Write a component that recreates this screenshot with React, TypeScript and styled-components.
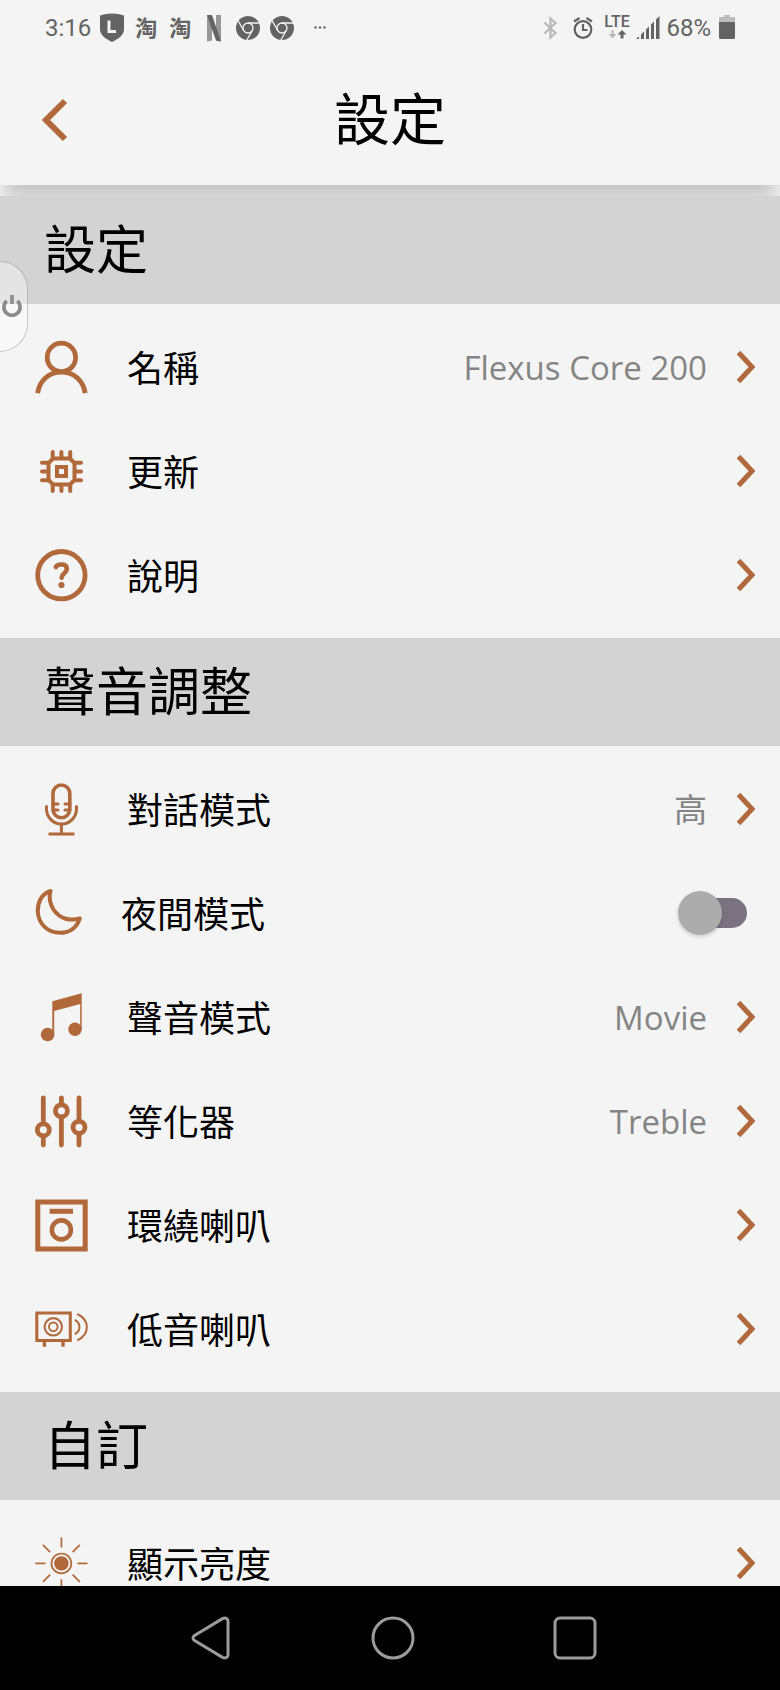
import React, { ReactNode, useState } from "react";
import styled, { createGlobalStyle, css } from "styled-components";

const ACCENT = "#b1683a";
const STATUS = "#636363";

const GlobalStyle = createGlobalStyle`
  * { box-sizing: border-box; }
  body {
    margin: 0;
    background: #f4f4f4;
    color: #000;
    font-family: "Open Sans", "Noto Sans CJK TC", sans-serif;
  }
  button { border: 0; background: none; padding: 0; font: inherit; color: inherit; cursor: pointer; }
  svg { display: block; flex: none; overflow: visible; }
`;

const Screen = styled.div`
  position: relative;
  display: flex;
  flex-direction: column;
  height: 100vh;
  overflow: hidden;
`;

const TopArea = styled.header`
  flex: none;
  margin-bottom: 11px;
  background: #f4f4f4;
  box-shadow: 0 19px 16px -5px rgba(0, 0, 0, 0.18);
`;

const StatusBar = styled.div`
  display: flex;
  align-items: center;
  justify-content: space-between;
  height: 56px;
  padding: 0 45px;
  color: ${STATUS};
  font-family: Roboto, sans-serif;
  font-size: 24px;
  line-height: 28px;
`;

const StatusGroup = styled.div<{ $gap: number }>`
  display: flex;
  align-items: center;
  gap: ${(p) => p.$gap}px;
`;

const StatusIcons = styled.div`
  display: flex;
  align-items: center;
`;

const AppGlyph = styled.span`
  width: 34px;
  padding-bottom: 4px;
  text-align: center;
  font-family: "Noto Sans CJK TC", sans-serif;
  font-size: 22px;
  font-weight: 700;
`;

const TitleBar = styled.div`
  display: grid;
  grid-template-columns: 1fr auto 1fr;
  align-items: center;
  height: 129px;
  padding: 0 40px 2px;
`;

const BackButton = styled.button`
  justify-self: start;
  padding: 10px 0;
`;

const Title = styled.h1`
  margin: 0;
  padding-bottom: 4px;
  font-size: 56px;
  font-weight: 400;
  line-height: 80px;
`;

const Content = styled.main`
  position: relative;
  flex: 1;
  min-height: 0;
  overflow-y: auto;
  scrollbar-width: none;
  background: #f4f4f4;
`;

const SectionTitle = styled.h2`
  display: flex;
  align-items: center;
  height: 108px;
  margin: 0;
  padding: 0 44px 2px;
  background: #d3d3d3;
  font-size: 52px;
  font-weight: 400;
  line-height: 76px;
`;

const List = styled.ul`
  margin: 0;
  padding: 11px 0;
  list-style: none;
`;

const rowLayout = css`
  display: flex;
  align-items: center;
  width: 100%;
  height: 104px;
  padding: 0 24px 0 35px;
  text-align: left;
  cursor: pointer;
`;

const RowButton = styled.button`
  && {
    ${rowLayout}
  }
`;

const RowLabel = styled.label`
  ${rowLayout}
`;

const RowText = styled.span`
  flex: 1;
  margin-left: 39px;
  padding-top: 3px;
  font-size: 36px;
  line-height: 52px;
`;

const RowValue = styled.span`
  margin-right: 29px;
  padding-top: 2px;
  color: #848484;
  font-size: 33px;
  line-height: 48px;
`;

const Switch = styled.input`
  position: relative;
  appearance: none;
  width: 69px;
  height: 44px;
  margin: 0 9px 0 0;
  cursor: pointer;

  &::before {
    content: "";
    position: absolute;
    inset: 7px 0 7px 6px;
    border-radius: 15px;
    background: #7a737f;
  }

  &::after {
    content: "";
    position: absolute;
    top: 0;
    left: 0;
    width: 44px;
    height: 44px;
    border-radius: 50%;
    background: #acacac;
    box-shadow: 0 2px 4px rgba(0, 0, 0, 0.15);
  }

  &:checked::after {
    left: auto;
    right: 0;
    background: ${ACCENT};
  }
`;

const PowerTab = styled.button`
  && {
    position: absolute;
    top: 261px;
    left: -2px;
    display: flex;
    align-items: center;
    width: 30px;
    height: 91px;
    padding-left: 2px;
    border: 1px solid rgba(0, 0, 0, 0.2);
    border-radius: 0 28px 28px 0;
    background: rgba(255, 255, 255, 0.4);
  }
`;

const NavBar = styled.nav`
  display: flex;
  flex: none;
  justify-content: center;
  height: 104px;
  padding-left: 6px;
  background: #000;
`;

const NavButton = styled.button`
  display: flex;
  align-items: center;
  justify-content: center;
  width: 182px;
`;

function Icon({ size = 53, children }: { size?: number; children: ReactNode }) {
  return (
    <svg width={size} height={size} viewBox={`0 0 ${size} ${size}`} fill="none" stroke={ACCENT} strokeWidth="4" aria-hidden="true">
      {children}
    </svg>
  );
}

const PersonIcon = () => (
  <Icon>
    <g strokeWidth="4.8">
      <circle cx="26.4" cy="16.4" r="14.2" />
      <path d="M2.6 52.2C4.5 39.2 14 31.2 26.4 31.2S48.3 39.2 50.2 52.2" />
    </g>
  </Icon>
);

const ChipIcon = () => (
  <Icon>
    <path d="M18 13.5h17l4.5 4.500v17l-4.500 4.500h-17l-4.500-4.500v-17z" />
    <rect x="22" y="22" width="9" height="9" />
    <path
      strokeLinecap="round"
      d="M17.7 7v6M26.4 7v6M35.2 7v6M17.7 40v6M26.4 40v6M35.2 40v6M7 17.7h6M7 26.4h6M7 35.2h6M40 17.7h6M40 26.4h6M40 35.2h6"
    />
  </Icon>
);

const HelpIcon = () => (
  <Icon>
    <circle cx="26.4" cy="26.2" r="23.7" strokeWidth="4.8" />
    <path d="M20.8 18C22.500 15 31.8 13.800 31.8 20C31.8 24.300 26.8 24.300 26.6 28.600" strokeWidth="4.6" strokeLinecap="round" />
    <circle cx="26.5" cy="36" r="3.1" fill={ACCENT} stroke="none" />
  </Icon>
);

const MicIcon = () => (
  <Icon>
    <rect x="18" y="2" width="16.8" height="32.7" rx="8.4" strokeWidth="3.6" />
    <path d="M18 21h5M18 27h5M30 21h5M30 27h5M11.5 23.5V26a15 15 0 0 0 30 0v-2.5" strokeWidth="3" strokeLinecap="round" />
    <path d="M26.4 41v10M13.5 51h26" strokeWidth="3" />
  </Icon>
);

const MoonIcon = () => (
  <Icon size={47}>
    <path
      d="M15.5 1C6 4 2.5 13 2.8 21.5C3.3 34 13 42.8 25 42.8C34.5 42.8 42 37.5 44.8 28.4C34.5 31.5 24.5 28.5 18.5 19.5C14.5 13 13.8 7 15.5 1Z"
      strokeLinejoin="round"
    />
  </Icon>
);

const MusicIcon = () => (
  <Icon>
    <g fill={ACCENT} stroke="none">
      <path d="M17.3 10.2L46.7 2.2V38.5H45.2V13L19.2 20V43.5H17.3Z" />
      <circle cx="12.6" cy="43.5" r="6.8" />
      <circle cx="40" cy="38.3" r="6.7" />
    </g>
  </Icon>
);

const EqualizerIcon = () => (
  <Icon>
    <g strokeWidth="4.8">
      <path d="M8.3 2.8V28M8.3 41v9M26.4 2.8V9M26.4 22v28M44 2.8V26M44 39v11" strokeLinecap="round" />
      <circle cx="8.3" cy="34.9" r="6" />
      <circle cx="26.4" cy="15.8" r="6" />
      <circle cx="44" cy="32.3" r="6" />
    </g>
  </Icon>
);

const SurroundIcon = () => (
  <Icon>
    <rect x="2.8" y="3" width="47.4" height="47" strokeWidth="5" />
    <path d="M14.7 12.3H38" strokeWidth="5" />
    <circle cx="26.4" cy="30.9" r="9.5" strokeWidth="4.6" />
  </Icon>
);

const SubwooferIcon = () => (
  <Icon>
    <rect x="1.8" y="10" width="33.5" height="27.5" strokeWidth="3" />
    <circle cx="18.3" cy="23.8" r="8.7" strokeWidth="2.1" />
    <circle cx="18.3" cy="23.8" r="4.3" strokeWidth="1.9" />
    <path d="M9.4 38v5.7M28 38v5.7" strokeWidth="3.4" />
    <path d="M39.8 17C46 20 46 28 39.8 31M42.3 11C55 17 55 31.5 42.3 37.3" strokeWidth="2" />
  </Icon>
);

const SunIcon = () => (
  <Icon>
    <circle cx="26.4" cy="26.4" r="7.2" fill={ACCENT} stroke="none" />
    <g strokeWidth="1.7">
      <circle cx="26.4" cy="26.4" r="9.9" />
      {[0, 45, 90, 135, 180, 225, 270, 315].map((a) => (
        <path key={a} d="M42.3 26.4h10.2" transform={`rotate(${a} 26.4 26.4)`} />
      ))}
    </g>
  </Icon>
);

const Chevron = () => (
  <svg width="20" height="34" viewBox="0 0 20 34" fill="none" stroke={ACCENT} strokeWidth="5" aria-hidden="true">
    <path d="M2.5 2.5L16 17L2.5 31.5" />
  </svg>
);

const ShieldIcon = () => (
  <svg width="34" height="34" viewBox="0 0 34 34" aria-hidden="true">
    <path d="M17 2.5C21 2.5 25 3.2 29 4.5V18C29 24 24 27.5 17 31C10 27.5 5 24 5 18V4.5C9 3.2 13 2.5 17 2.5Z" fill={STATUS} />
    <path d="M14 9.5V20.5H21" fill="none" stroke="#f4f4f4" strokeWidth="3" />
  </svg>
);

const NetflixIcon = () => (
  <svg width="34" height="34" viewBox="0 0 34 34" aria-hidden="true">
    <path d="M10 4h5v25.5l-5 1zM19 4h5v26.5l-5-1z" fill="#979797" />
    <path d="M10 4h5l9 26.5-5-1z" fill={STATUS} />
  </svg>
);

const ChromeIcon = () => (
  <svg width="34" height="34" viewBox="0 0 34 34" fill="none" stroke="#f4f4f4" strokeWidth="1.3" aria-hidden="true">
    <circle cx="17" cy="17" r="12" fill={STATUS} stroke="none" />
    <circle cx="17" cy="17" r="5" />
    <path d="M17 12h11.5M12.7 19.5L7 9.5M21.3 19.5L15.6 29.5" />
  </svg>
);

const DotsIcon = () => (
  <svg width="34" height="34" viewBox="0 0 34 34" fill={STATUS} aria-hidden="true">
    <circle cx="16.5" cy="16.5" r="1.2" />
    <circle cx="21" cy="16.5" r="1.2" />
    <circle cx="25.5" cy="16.5" r="1.2" />
  </svg>
);

const BluetoothIcon = () => (
  <svg width="32" height="34" viewBox="0 0 32 34" fill="none" stroke="#b9b9b9" strokeWidth="2.2" aria-hidden="true">
    <path d="M10.5 11.5L21.5 22L16.5 26.5V7.5L21.5 12L10.5 22.5" />
  </svg>
);

const AlarmIcon = () => (
  <svg width="34" height="34" viewBox="0 0 34 34" fill="none" stroke={STATUS} strokeWidth="2.2" aria-hidden="true">
    <circle cx="17" cy="18.5" r="8.3" />
    <path d="M17 13v6h4.5M8 10.5l5.500-3.500M26 10.5l-5.500-3.500" />
  </svg>
);

const LteIcon = () => (
  <svg width="34" height="34" viewBox="0 0 34 34" aria-label="LTE">
    <text x="17" y="16" textAnchor="middle" fontFamily="Roboto, sans-serif" fontSize="16" fontWeight="500" fill={STATUS}>
      LTE
    </text>
    <path d="M11.500 19v4h-3l4 4.500 4-4.500h-3v-4z" fill="#b9b9b9" />
    <path d="M20.500 27.500v-4h-3l4.500-4.500 4.500 4.500h-3v4z" fill={STATUS} />
  </svg>
);

const SignalIcon = () => (
  <svg width="24" height="34" viewBox="0 0 24 34" fill={STATUS} aria-hidden="true">
    <path d="M0 28L3 25.5V28ZM5 23.5L8 20.5V28H5ZM10 18.5L13 15.5V28H10ZM15 13.5L18 10.5V28H15ZM20 8.500L23.5 5V28H20Z" />
  </svg>
);

const BatteryIcon = () => (
  <svg width="16" height="34" viewBox="0 0 16 34" aria-hidden="true">
    <path d="M5 4h6v2h5v6H0V6h5z" fill="#bcbcbc" />
    <path d="M0 11h16v15.5a1.500 1.500 0 0 1-1.500 1.500h-13a1.500 1.500 0 0 1-1.500-1.500z" fill={STATUS} />
  </svg>
);

interface Item {
  label: string;
  icon: ReactNode;
  value?: string;
  toggle?: boolean;
}

const sections: { title: string; items: Item[] }[] = [
  {
    title: "設定",
    items: [
      { label: "名稱", icon: <PersonIcon />, value: "Flexus Core 200" },
      { label: "更新", icon: <ChipIcon /> },
      { label: "說明", icon: <HelpIcon /> },
    ],
  },
  {
    title: "聲音調整",
    items: [
      { label: "對話模式", icon: <MicIcon />, value: "高" },
      { label: "夜間模式", icon: <MoonIcon />, toggle: true },
      { label: "聲音模式", icon: <MusicIcon />, value: "Movie" },
      { label: "等化器", icon: <EqualizerIcon />, value: "Treble" },
      { label: "環繞喇叭", icon: <SurroundIcon /> },
      { label: "低音喇叭", icon: <SubwooferIcon /> },
    ],
  },
  {
    title: "自訂",
    items: [{ label: "顯示亮度", icon: <SunIcon /> }],
  },
];

function ToggleRow({ label, icon }: Item) {
  const [on, setOn] = useState(false);
  return (
    <RowLabel>
      {icon}
      <RowText>{label}</RowText>
      <Switch type="checkbox" role="switch" checked={on} onChange={(e) => setOn(e.target.checked)} />
    </RowLabel>
  );
}

function LinkRow({ label, icon, value }: Item) {
  return (
    <RowButton type="button">
      {icon}
      <RowText>{label}</RowText>
      {value && <RowValue>{value}</RowValue>}
      <Chevron />
    </RowButton>
  );
}

export default function App() {
  return (
    <Screen>
      <GlobalStyle />
      <TopArea>
        <StatusBar>
          <StatusGroup $gap={4}>
            <span>3:16</span>
            <StatusIcons>
              <ShieldIcon />
              <AppGlyph>淘</AppGlyph>
              <AppGlyph>淘</AppGlyph>
              <NetflixIcon />
              <ChromeIcon />
              <ChromeIcon />
              <DotsIcon />
            </StatusIcons>
          </StatusGroup>
          <StatusGroup $gap={8}>
            <StatusGroup $gap={6}>
              <StatusGroup $gap={2}>
                <StatusIcons>
                  <BluetoothIcon />
                  <AlarmIcon />
                  <LteIcon />
                </StatusIcons>
                <SignalIcon />
              </StatusGroup>
              <span>68%</span>
            </StatusGroup>
            <BatteryIcon />
          </StatusGroup>
        </StatusBar>
        <TitleBar>
          <BackButton type="button" aria-label="返回">
            <svg width="28" height="44" viewBox="0 0 28 44" fill="none" stroke={ACCENT} strokeWidth="6" aria-hidden="true">
              <path d="M25 3L6 22L25 41" />
            </svg>
          </BackButton>
          <Title>設定</Title>
        </TitleBar>
      </TopArea>
      <Content>
        {sections.map((section) => (
          <section key={section.title}>
            <SectionTitle>{section.title}</SectionTitle>
            <List>
              {section.items.map((item) => (
                <li key={item.label}>{item.toggle ? <ToggleRow {...item} /> : <LinkRow {...item} />}</li>
              ))}
            </List>
          </section>
        ))}
      </Content>
      <NavBar>
        <NavButton type="button" aria-label="返回">
          <svg width="44" height="44" viewBox="0 0 44 44" fill="none" stroke="#9c9c9c" strokeWidth="3" strokeLinejoin="round">
            <path d="M5.5 19.5L33.5 2.6C36 1.5 39 2 39 5.5V38.5C39 42 36 42.5 33.5 41.4L5.5 24.5C3.5 23 3.5 21 5.5 19.5Z" />
          </svg>
        </NavButton>
        <NavButton type="button" aria-label="主畫面">
          <svg width="44" height="44" viewBox="0 0 44 44" fill="none" stroke="#9c9c9c" strokeWidth="3">
            <circle cx="22" cy="22" r="20" />
          </svg>
        </NavButton>
        <NavButton type="button" aria-label="最近使用">
          <svg width="44" height="44" viewBox="0 0 44 44" fill="none" stroke="#9c9c9c" strokeWidth="3">
            <rect x="2" y="2" width="40" height="40" rx="5" />
          </svg>
        </NavButton>
      </NavBar>
      <PowerTab type="button" aria-label="電源">
        <svg width="22" height="24" viewBox="0 0 22 24" fill="none" stroke="#8c8c8c" strokeWidth="3.6" aria-hidden="true">
          <path d="M5.8 6A8.100 8.100 0 1 0 16.200 6M11 0V9" />
        </svg>
      </PowerTab>
    </Screen>
  );
}
